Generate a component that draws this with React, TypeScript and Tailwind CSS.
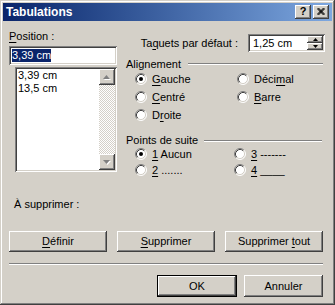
import type { ReactNode } from 'react';

const raised =
  'shadow-[inset_-1px_-1px_#404040,inset_1px_1px_#ffffff,inset_-2px_-2px_#808080,inset_2px_2px_#d4d0c8]';
const sunken =
  'shadow-[inset_1px_1px_#808080,inset_-1px_-1px_#ffffff,inset_2px_2px_#404040,inset_-2px_-2px_#d4d0c8]';

function U({ children }: { children: ReactNode }) {
  return <span className="underline underline-offset-[2px] decoration-1">{children}</span>;
}

function Radio({ checked }: { checked?: boolean }) {
  return (
    <svg width="12" height="12" viewBox="0 0 12 12" className="shrink-0">
      <circle cx="6" cy="6" r="5" fill="#ffffff" />
      <path d="M2.11 9.89 A5.5 5.5 0 0 1 9.89 2.11" stroke="#808080" fill="none" />
      <path d="M9.89 2.11 A5.5 5.5 0 0 1 2.11 9.89" stroke="#ffffff" fill="none" />
      <path d="M2.82 9.18 A4.5 4.5 0 0 1 9.18 2.82" stroke="#404040" fill="none" />
      <path d="M9.18 2.82 A4.5 4.5 0 0 1 2.82 9.18" stroke="#d4d0c8" fill="none" />
      {checked && <circle cx="6" cy="6" r="2" fill="#000000" />}
    </svg>
  );
}

function Option({ checked, children }: { checked?: boolean; children: ReactNode }) {
  return (
    <div className="flex items-center gap-[5px]">
      <Radio checked={checked} />
      <span>{children}</span>
    </div>
  );
}

function GroupHeader({ label, gap, right }: { label: string; gap: number; right: number }) {
  return (
    <div className="flex items-center h-full">
      <span>{label}</span>
      <div
        className="flex-1 h-[2px] border-t border-t-[#808080] border-b border-b-white"
        style={{ marginLeft: gap, marginRight: right }}
      />
    </div>
  );
}

function Arrow({ up, color = '#000000' }: { up?: boolean; color?: string }) {
  return (
    <svg width="7" height="4" viewBox="0 0 7 4">
      {up ? (
        <polygon points="3.5,0 7,4 0,4" fill={color} />
      ) : (
        <polygon points="0,0 7,0 3.5,4" fill={color} />
      )}
    </svg>
  );
}

function DisabledArrow({ up }: { up?: boolean }) {
  return (
    <div className="relative w-[8px] h-[5px]">
      <div className="absolute left-[1px] top-[1px]">
        <Arrow up={up} color="#ffffff" />
      </div>
      <div className="absolute left-0 top-0">
        <Arrow up={up} color="#808080" />
      </div>
    </div>
  );
}

function Scrollbar() {
  return (
    <div className="w-[16px] flex flex-col">
      <div className={`h-[16px] bg-[#d4d0c8] ${raised} flex items-center justify-center`}>
        <DisabledArrow up />
      </div>
      <div className="flex-1 bg-[repeating-conic-gradient(#ffffff_0_25%,#d4d0c8_0_50%)] bg-size-[2px_2px]" />
      <div className={`h-[16px] bg-[#d4d0c8] ${raised} flex items-center justify-center`}>
        <DisabledArrow />
      </div>
    </div>
  );
}

function Button({ children, isDefault, className = '' }: { children: ReactNode; isDefault?: boolean; className?: string }) {
  if (isDefault) {
    return (
      <div className={`border border-black ${className}`}>
        <div className={`w-full h-full bg-[#d4d0c8] ${raised} flex items-center justify-center`}>{children}</div>
      </div>
    );
  }
  return (
    <div className={`bg-[#d4d0c8] ${raised} flex items-center justify-center ${className}`}>{children}</div>
  );
}

function TitleBar() {
  return (
    <div className="h-[18px] flex items-center bg-linear-to-r from-[#0a246a] to-[#7ea8e0] pl-[3px] pr-[3px]">
      <span className="flex-1 text-white font-bold text-[12px] leading-[14px]">Tabulations</span>
      <div className={`w-[16px] h-[14px] bg-[#d4d0c8] ${raised} flex items-center justify-center font-bold text-[11px] leading-[11px] pb-px`}>
        ?
      </div>
      <div className={`ml-[2px] w-[16px] h-[14px] bg-[#d4d0c8] ${raised} flex items-center justify-center pb-px`}>
        <svg width="8" height="7" viewBox="0 0 8 7">
          <path d="M0.5 0 L7.5 7 M1.5 0 L7.5 6 M0.5 1 L6.5 7 M7.5 0 L0.5 7 M6.5 0 L0.5 6 M7.5 1 L1.5 7" stroke="#000000" strokeWidth="0.9" />
        </svg>
      </div>
    </div>
  );
}

export default function App() {
  return (
    <div
      className={`w-[335px] h-[305px] bg-[#d4d0c8] p-[3px] font-['Liberation_Sans',Arial,sans-serif] text-[11px] leading-[13px] text-black select-none shadow-[inset_-1px_-1px_#404040,inset_1px_1px_#d4d0c8,inset_-2px_-2px_#808080,inset_2px_2px_#ffffff]`}
    >
      <TitleBar />
      <div className="flex flex-col px-[6px]">
        <div className="flex h-[157px]">
          {/* position column */}
          <div className="w-[108px] flex flex-col pt-[9px]">
            <div>
              <U>P</U>osition :
            </div>
            <div className={`mt-[3px] h-[19px] bg-white ${sunken} flex items-center px-[3px]`}>
              <span className="bg-[#0a246a] text-white">3,39 cm</span>
            </div>
            <div className={`mt-[2px] ml-[6px] w-[102px] h-[105px] bg-white ${sunken} p-[2px] flex`}>
              <div className="flex-1 pl-px">
                <div>3,39 cm</div>
                <div>13,5 cm</div>
              </div>
              <Scrollbar />
            </div>
          </div>

          {/* options column */}
          <div className="ml-[9px] w-[199px] flex flex-col">
            <div className="mt-[13px] flex items-center justify-end">
              <span>
                Ta<U>q</U>uets par défaut :
              </span>
              <div className={`ml-[10px] w-[77px] h-[18px] bg-white ${sunken} flex items-center pl-[5px] pr-[2px]`}>
                <span className="flex-1">1,25 cm</span>
                <div className="w-[16px] h-[14px] flex flex-col">
                  <div className={`h-[7px] bg-[#d4d0c8] ${raised} flex items-center justify-center`}>
                    <svg width="5" height="3" viewBox="0 0 5 3">
                      <polygon points="2.5,0 5,3 0,3" fill="#000000" />
                    </svg>
                  </div>
                  <div className={`h-[7px] bg-[#d4d0c8] ${raised} flex items-center justify-center`}>
                    <svg width="5" height="3" viewBox="0 0 5 3">
                      <polygon points="0,0 5,0 2.5,3" fill="#000000" />
                    </svg>
                  </div>
                </div>
              </div>
            </div>

            <div className="mt-[6px] h-[12px]">
              <GroupHeader label="Alignement" gap={7} right={2} />
            </div>
            <div className="ml-[9px] grid grid-cols-[102px_1fr] auto-rows-[18px] items-center">
              <Option checked>
                <U>G</U>auche
              </Option>
              <Option>
                Déci<U>m</U>al
              </Option>
              <Option>
                <U>C</U>entré
              </Option>
              <Option>
                <U>B</U>arre
              </Option>
              <Option>
                D<U>r</U>oite
              </Option>
            </div>

            <div className="mt-[11px] h-[11px]">
              <GroupHeader label="Points de suite" gap={6} right={3} />
            </div>
            <div className="ml-[9px] grid grid-cols-[99px_1fr] auto-rows-[16px] items-center">
              <Option checked>
                <U>1</U> Aucun
              </Option>
              <Option>
                <U>3</U> -------
              </Option>
              <Option>
                <U>2</U> .......
              </Option>
              <Option>
                <U>4</U> ____
              </Option>
            </div>
          </div>
        </div>

        <div className="mt-[20px] ml-[5px]">À supprimer :</div>

        <div className="mt-[20px] w-[314px] grid grid-cols-3 gap-[10px]">
          <Button className="h-[21px]">
            <span>
              <U>D</U>éfinir
            </span>
          </Button>
          <Button className="h-[21px]">
            <span>
              <U>S</U>upprimer
            </span>
          </Button>
          <Button className="h-[21px]">
            <span>
              Supprimer <U>t</U>out
            </span>
          </Button>
        </div>

        <div className="mt-[11px] w-[314px] h-[2px] border-t border-t-[#808080] border-b border-b-white" />

        <div className="mt-[10px] w-[314px] flex justify-end gap-[7px]">
          <Button isDefault className="w-[80px] h-[22px]">
            OK
          </Button>
          <Button className="w-[79px] h-[22px]">Annuler</Button>
        </div>
      </div>
    </div>
  );
}
